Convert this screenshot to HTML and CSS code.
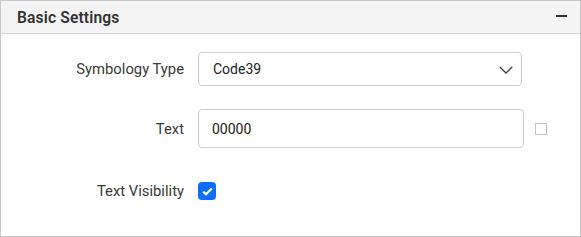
FILE: index.html
```html
<!DOCTYPE html>
<html>
<head>
<meta charset="utf-8">
<link rel="stylesheet" href="styles.css">
</head>
<body>
<div class="panel">
  <div class="header">
    <span class="title">Basic Settings</span>
    <span class="minus"></span>
  </div>
  <div class="form">
    <label class="label">Symbology Type</label>
    <div class="select">
      <span>Code39</span>
      <svg class="chev" width="14" height="8" viewBox="0 0 14 8"><path d="M0.7 0.7 L7 7 L13.3 0.7" fill="none" stroke="#444" stroke-width="1.3"/></svg>
    </div>
    <div></div>

    <label class="label">Text</label>
    <div class="input">00000</div>
    <span class="smallbox"></span>

    <label class="label">Text Visibility</label>
    <span class="check">
      <svg width="11" height="9" viewBox="0 0 11 9"><path d="M1.2 4.6 L4 7.3 L9.8 1.5" fill="none" stroke="#fff" stroke-width="2.2"/></svg>
    </span>
    <div></div>
  </div>
</div>
</body>
</html>
```

FILE: styles.css
```css
html, body {
  margin: 0;
  padding: 0;
  background: #fff;
}
body {
  font-family: Roboto, "Liberation Sans", sans-serif;
  color: #333;
}
.panel {
  width: 579px;
  height: 235px;
  border: 1px solid #c8c8c8;
  background: #fff;
}
.header {
  height: 32px;
  background: #f4f4f4;
  border-bottom: 1px solid #d4d4d4;
  display: flex;
  align-items: center;
  justify-content: space-between;
  padding: 0 13px 0 16px;
}
.title {
  font-size: 15.6px;
  font-weight: 600;
  color: #333;
  letter-spacing: 0.15px;
  padding-top: 1px;
}
.minus {
  display: block;
  width: 11px;
  height: 2px;
  background: #333;
  margin-top: -2px;
}
.form {
  display: grid;
  grid-template-columns: 176px 326px 12px;
  grid-template-rows: 34px 39px 40px;
  column-gap: 14px;
  row-gap: 23px;
  padding: 18px 0 0 7px;
  align-items: center;
}
.label {
  justify-self: end;
  font-size: 14.8px;
  color: #3a3a3a;
}
.select {
  box-sizing: border-box;
  width: 324px;
  height: 34px;
  border: 1px solid #cfcfcf;
  border-radius: 4px;
  display: flex;
  align-items: center;
  justify-content: space-between;
  padding: 0 8px 0 14px;
  font-size: 14px;
  color: #222;
}
.chev {
  display: block;
  margin-top: 1px;
}
.input {
  box-sizing: border-box;
  width: 326px;
  height: 39px;
  border: 1px solid #cfcfcf;
  border-radius: 4px;
  display: flex;
  align-items: center;
  padding: 0 13px;
  font-size: 14px;
  color: #222;
}
.smallbox {
  box-sizing: border-box;
  width: 12px;
  height: 12px;
  border: 1px solid #c4c4c4;
  justify-self: start;
  margin-left: -3px;
}
.check {
  box-sizing: border-box;
  width: 18px;
  height: 18px;
  border-radius: 4px;
  background: #0d6efd;
  display: flex;
  align-items: center;
  justify-content: center;
  justify-self: start;
}
.check svg {
  display: block;
}
```
